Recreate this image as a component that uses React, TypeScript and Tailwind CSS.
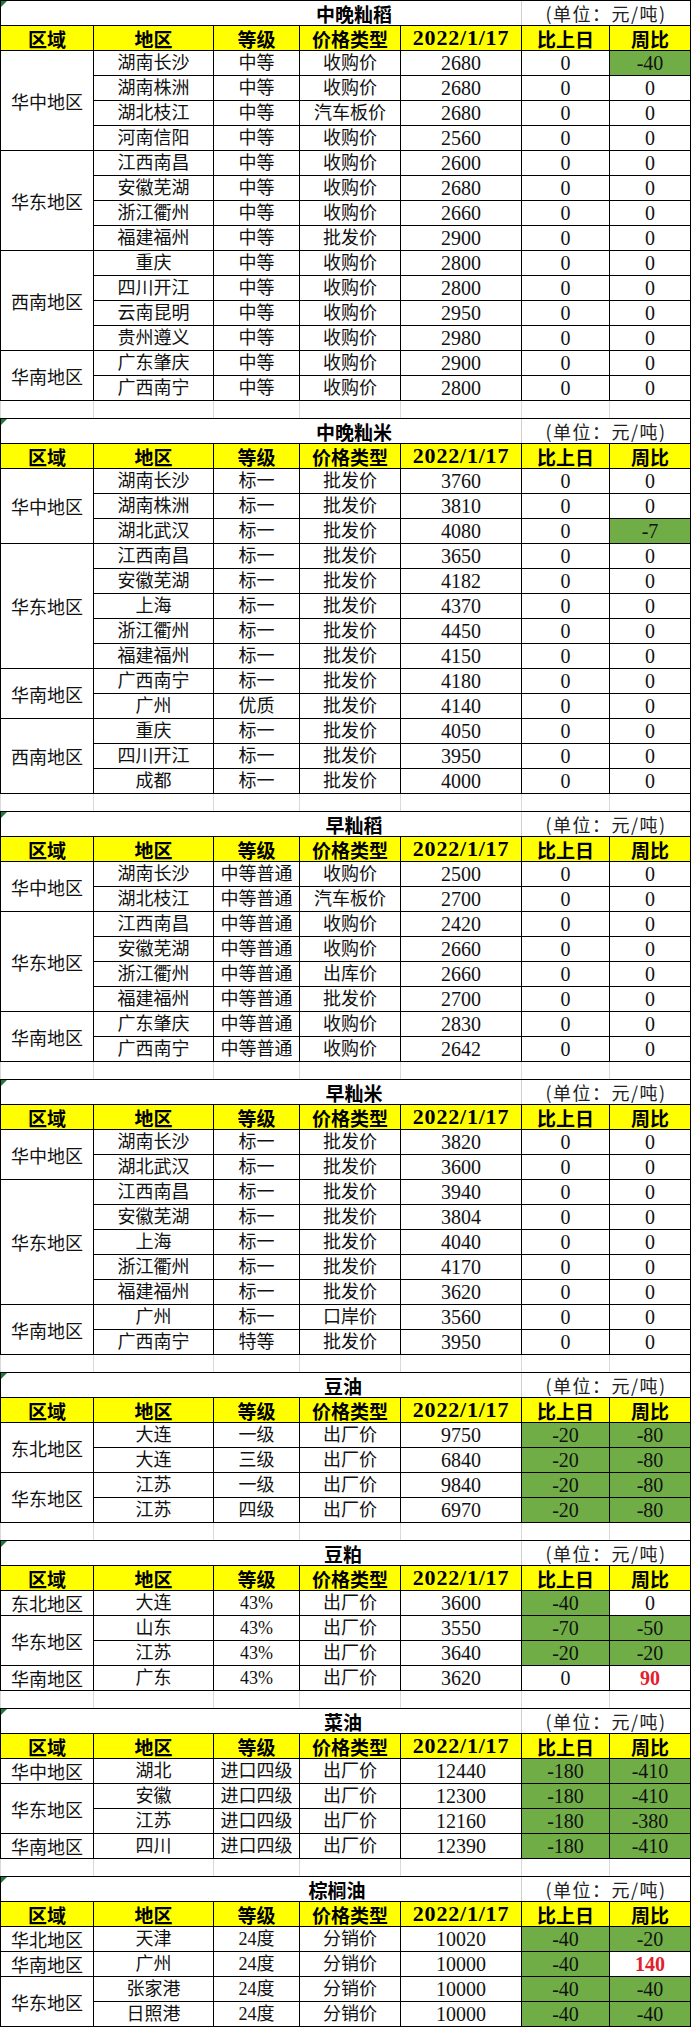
import React from 'react';

type Cell = string | { v: string; green?: boolean; red?: boolean };
type Row = [string, string, string, string, Cell, Cell];
type Group = { region: string; rows: Row[] };
type Section = { title: string; titlePad: string; groups: Group[] };

const G = (v: string) => ({ v, green: true });
const R = (v: string) => ({ v, red: true });

const SECTIONS: Section[] = [
  {
    title: '中晚籼稻',
    titlePad: 'pl-[186px]',
    groups: [
      {
        region: '华中地区',
        rows: [
          ['湖南长沙', '中等', '收购价', '2680', '0', G('-40')],
          ['湖南株洲', '中等', '收购价', '2680', '0', '0'],
          ['湖北枝江', '中等', '汽车板价', '2680', '0', '0'],
          ['河南信阳', '中等', '收购价', '2560', '0', '0'],
        ],
      },
      {
        region: '华东地区',
        rows: [
          ['江西南昌', '中等', '收购价', '2600', '0', '0'],
          ['安徽芜湖', '中等', '收购价', '2680', '0', '0'],
          ['浙江衢州', '中等', '收购价', '2660', '0', '0'],
          ['福建福州', '中等', '批发价', '2900', '0', '0'],
        ],
      },
      {
        region: '西南地区',
        rows: [
          ['重庆', '中等', '收购价', '2800', '0', '0'],
          ['四川开江', '中等', '收购价', '2800', '0', '0'],
          ['云南昆明', '中等', '收购价', '2950', '0', '0'],
          ['贵州遵义', '中等', '收购价', '2980', '0', '0'],
        ],
      },
      {
        region: '华南地区',
        rows: [
          ['广东肇庆', '中等', '收购价', '2900', '0', '0'],
          ['广西南宁', '中等', '收购价', '2800', '0', '0'],
        ],
      },
    ],
  },
  {
    title: '中晚籼米',
    titlePad: 'pl-[186px]',
    groups: [
      {
        region: '华中地区',
        rows: [
          ['湖南长沙', '标一', '批发价', '3760', '0', '0'],
          ['湖南株洲', '标一', '批发价', '3810', '0', '0'],
          ['湖北武汉', '标一', '批发价', '4080', '0', G('-7')],
        ],
      },
      {
        region: '华东地区',
        rows: [
          ['江西南昌', '标一', '批发价', '3650', '0', '0'],
          ['安徽芜湖', '标一', '批发价', '4182', '0', '0'],
          ['上海', '标一', '批发价', '4370', '0', '0'],
          ['浙江衢州', '标一', '批发价', '4450', '0', '0'],
          ['福建福州', '标一', '批发价', '4150', '0', '0'],
        ],
      },
      {
        region: '华南地区',
        rows: [
          ['广西南宁', '标一', '批发价', '4180', '0', '0'],
          ['广州', '优质', '批发价', '4140', '0', '0'],
        ],
      },
      {
        region: '西南地区',
        rows: [
          ['重庆', '标一', '批发价', '4050', '0', '0'],
          ['四川开江', '标一', '批发价', '3950', '0', '0'],
          ['成都', '标一', '批发价', '4000', '0', '0'],
        ],
      },
    ],
  },
  {
    title: '早籼稻',
    titlePad: 'pl-[186px]',
    groups: [
      {
        region: '华中地区',
        rows: [
          ['湖南长沙', '中等普通', '收购价', '2500', '0', '0'],
          ['湖北枝江', '中等普通', '汽车板价', '2700', '0', '0'],
        ],
      },
      {
        region: '华东地区',
        rows: [
          ['江西南昌', '中等普通', '收购价', '2420', '0', '0'],
          ['安徽芜湖', '中等普通', '收购价', '2660', '0', '0'],
          ['浙江衢州', '中等普通', '出库价', '2660', '0', '0'],
          ['福建福州', '中等普通', '批发价', '2700', '0', '0'],
        ],
      },
      {
        region: '华南地区',
        rows: [
          ['广东肇庆', '中等普通', '收购价', '2830', '0', '0'],
          ['广西南宁', '中等普通', '收购价', '2642', '0', '0'],
        ],
      },
    ],
  },
  {
    title: '早籼米',
    titlePad: 'pl-[186px]',
    groups: [
      {
        region: '华中地区',
        rows: [
          ['湖南长沙', '标一', '批发价', '3820', '0', '0'],
          ['湖北武汉', '标一', '批发价', '3600', '0', '0'],
        ],
      },
      {
        region: '华东地区',
        rows: [
          ['江西南昌', '标一', '批发价', '3940', '0', '0'],
          ['安徽芜湖', '标一', '批发价', '3804', '0', '0'],
          ['上海', '标一', '批发价', '4040', '0', '0'],
          ['浙江衢州', '标一', '批发价', '4170', '0', '0'],
          ['福建福州', '标一', '批发价', '3620', '0', '0'],
        ],
      },
      {
        region: '华南地区',
        rows: [
          ['广州', '标一', '口岸价', '3560', '0', '0'],
          ['广西南宁', '特等', '批发价', '3950', '0', '0'],
        ],
      },
    ],
  },
  {
    title: '豆油',
    titlePad: 'pl-[164px]',
    groups: [
      {
        region: '东北地区',
        rows: [
          ['大连', '一级', '出厂价', '9750', G('-20'), G('-80')],
          ['大连', '三级', '出厂价', '6840', G('-20'), G('-80')],
        ],
      },
      {
        region: '华东地区',
        rows: [
          ['江苏', '一级', '出厂价', '9840', G('-20'), G('-80')],
          ['江苏', '四级', '出厂价', '6970', G('-20'), G('-80')],
        ],
      },
    ],
  },
  {
    title: '豆粕',
    titlePad: 'pl-[164px]',
    groups: [
      { region: '东北地区', rows: [['大连', '43%', '出厂价', '3600', G('-40'), '0']] },
      {
        region: '华东地区',
        rows: [
          ['山东', '43%', '出厂价', '3550', G('-70'), G('-50')],
          ['江苏', '43%', '出厂价', '3640', G('-20'), G('-20')],
        ],
      },
      { region: '华南地区', rows: [['广东', '43%', '出厂价', '3620', '0', R('90')]] },
    ],
  },
  {
    title: '菜油',
    titlePad: 'pl-[164px]',
    groups: [
      { region: '华中地区', rows: [['湖北', '进口四级', '出厂价', '12440', G('-180'), G('-410')]] },
      {
        region: '华东地区',
        rows: [
          ['安徽', '进口四级', '出厂价', '12300', G('-180'), G('-410')],
          ['江苏', '进口四级', '出厂价', '12160', G('-180'), G('-380')],
        ],
      },
      { region: '华南地区', rows: [['四川', '进口四级', '出厂价', '12390', G('-180'), G('-410')]] },
    ],
  },
  {
    title: '棕榈油',
    titlePad: 'pl-[152px]',
    groups: [
      { region: '华北地区', rows: [['天津', '24度', '分销价', '10020', G('-40'), G('-20')]] },
      { region: '华南地区', rows: [['广州', '24度', '分销价', '10000', G('-40'), R('140')]] },
      {
        region: '华东地区',
        rows: [
          ['张家港', '24度', '分销价', '10000', G('-40'), G('-40')],
          ['日照港', '24度', '分销价', '10000', G('-40'), G('-40')],
        ],
      },
    ],
  },
];

// column widths, first one includes the left border line
const W = ['w-[94px]', 'w-[120px]', 'w-[86px]', 'w-[101px]', 'w-[121px]', 'w-[88px]', 'w-[81px]'];
const HEAD = ['区域', '地区', '等级', '价格类型', '2022/1/17', '比上日', '周比'];

const cjk = "font-['Liberation_Serif','Noto_Sans_CJK_SC',serif] text-[18px]";
const num = "font-['Liberation_Serif','Noto_Sans_CJK_SC',serif] text-[20px]";

function DataCell({ cell, width, isNum }: { cell: Cell; width: string; isNum: boolean }) {
  const c = typeof cell === 'string' ? { v: cell } : cell;
  return (
    <div
      className={`${width} flex items-center justify-center border-r border-black leading-none text-[#111] ${
        isNum ? num : cjk
      } ${c.green ? 'bg-[#70ad47]' : ''} ${c.red ? 'font-bold text-[#e3202b]' : ''}`}
    >
      {c.v}
    </div>
  );
}

function SectionTable({ s, last }: { s: Section; last: boolean }) {
  return (
    <div>
      <div className="flex h-[25px] border-b border-black">
        <div
          className={`relative flex w-[522px] items-center justify-center border-l border-r border-l-black border-r-[#cfcfcf] ${s.titlePad} font-['Noto_Sans_CJK_SC',sans-serif] text-[19px] font-bold leading-none text-black`}
        >
          <svg className="absolute left-0 top-0" width="6" height="6" viewBox="0 0 6 6">
            <polygon points="0,0 6,0 0,6" fill="#1f7a3d" />
          </svg>
          {s.title}
        </div>
        <div className="flex w-[169px] items-center justify-center border-r border-black font-['Noto_Sans_CJK_SC',sans-serif] text-[18px] leading-none tracking-[1.5px] text-[#222]">
          (单位：元/吨)
        </div>
      </div>

      <div className="flex h-[25px] border-b border-black bg-[#ffff00]">
        {HEAD.map((h, i) => (
          <div
            key={h}
            className={`${W[i]} ${i === 0 ? 'border-l' : ''} flex items-center justify-center border-r border-black font-bold leading-none text-black ${
              i === 4
                ? "font-['Liberation_Serif',serif] text-[22px] tracking-[0.8px]"
                : "font-['Noto_Sans_CJK_SC',sans-serif] text-[19px]"
            }`}
          >
            {h}
          </div>
        ))}
      </div>

      {s.groups.map((g, gi) => (
        <div key={gi} className="flex">
          <div
            className={`${W[0]} flex items-center justify-center border-b border-l border-r border-black font-['Noto_Sans_CJK_SC',sans-serif] text-[18px] leading-none text-[#111]`}
          >
            {g.region}
          </div>
          <div className="flex flex-col">
            {g.rows.map((r, ri) => (
              <div key={ri} className="flex h-[25px] border-b border-black">
                {r.map((c, ci) => (
                  <DataCell key={ci} cell={c} width={W[ci + 1]} isNum={ci >= 3} />
                ))}
              </div>
            ))}
          </div>
        </div>
      ))}

      {!last && (
        <div className="flex h-[18px] border-b border-black">
          {W.map((w, i) => (
            <div
              key={i}
              className={`${w} ${i === 0 ? 'border-l border-l-[#d9d9d9]' : ''} border-r ${
                i === W.length - 1 ? 'border-r-black' : 'border-r-[#d9d9d9]'
              }`}
            />
          ))}
        </div>
      )}
    </div>
  );
}

export default function App() {
  return (
    <div className="min-h-[2027px] w-[692px] bg-white">
      <div className="w-[691px] border-t border-black">
        {SECTIONS.map((s, i) => (
          <SectionTable key={s.title} s={s} last={i === SECTIONS.length - 1} />
        ))}
      </div>
    </div>
  );
}
